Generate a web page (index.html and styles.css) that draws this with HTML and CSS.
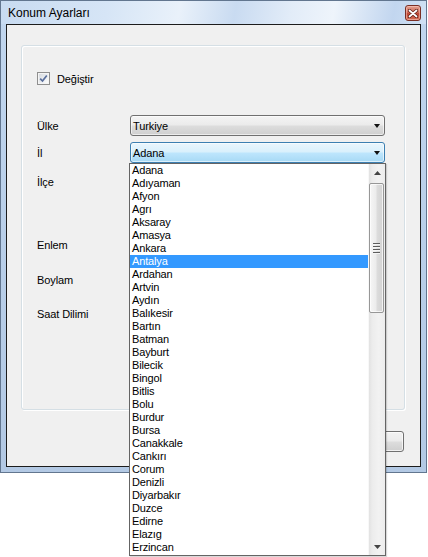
FILE: index.html
```html
<!DOCTYPE html>
<html lang="tr">
<head>
<meta charset="utf-8">
<title>Konum Ayarları</title>
<link rel="stylesheet" href="styles.css">
</head>
<body>
<div class="window">
  <div class="titlebar">
    <span class="title">Konum Ayarları</span>
    <span class="close" aria-label="Kapat">
      <svg width="10" height="9" viewBox="0 0 10 9"><path d="M1.5 1.5 L8.5 7.5 M8.5 1.5 L1.5 7.5" stroke="#5a1a12" stroke-width="3.2" stroke-linecap="round"/><path d="M1.5 1.5 L8.5 7.5 M8.5 1.5 L1.5 7.5" stroke="#ffffff" stroke-width="1.8" stroke-linecap="round"/></svg>
    </span>
  </div>
  <div class="client">
    <div class="group">
      <label class="row row-check">
        <span class="checkbox"><svg width="9" height="9" viewBox="0 0 9 9"><path d="M1.2 4.6 L3.5 7 L7.8 1.4" fill="none" stroke="#5a6f9c" stroke-width="1.7"/></svg></span>
        <span class="check-label">Değiştir</span>
      </label>
      <div class="row row-ulke">
        <span class="label">Ülke</span>
        <div class="combo"><span class="combo-text">Turkiye</span><span class="arrow"></span></div>
      </div>
      <div class="row row-il">
        <span class="label">İl</span>
        <div class="combo combo-open"><span class="combo-text">Adana</span><span class="arrow"></span></div>
      </div>
      <div class="row row-ilce">
        <span class="label">İlçe</span>
        <div class="combo"><span class="combo-text"></span><span class="arrow"></span></div>
      </div>
      <div class="row row-enlem">
        <span class="label">Enlem</span>
        <div class="textbox"></div>
      </div>
      <div class="row row-boylam">
        <span class="label">Boylam</span>
        <div class="textbox"></div>
      </div>
      <div class="row row-saat">
        <span class="label">Saat Dilimi</span>
        <div class="combo"><span class="combo-text"></span><span class="arrow"></span></div>
      </div>
    </div>
    <div class="footer">
      <button class="btn" type="button">Kaydet</button>
    </div>
  </div>
</div>

<div class="dropdown">
  <ul class="items">
    <li>Adana</li>
    <li>Adıyaman</li>
    <li>Afyon</li>
    <li>Agrı</li>
    <li>Aksaray</li>
    <li>Amasya</li>
    <li>Ankara</li>
    <li class="selected">Antalya</li>
    <li>Ardahan</li>
    <li>Artvin</li>
    <li>Aydın</li>
    <li>Balıkesir</li>
    <li>Bartın</li>
    <li>Batman</li>
    <li>Bayburt</li>
    <li>Bilecik</li>
    <li>Bingol</li>
    <li>Bitlis</li>
    <li>Bolu</li>
    <li>Burdur</li>
    <li>Bursa</li>
    <li>Canakkale</li>
    <li>Cankırı</li>
    <li>Corum</li>
    <li>Denizli</li>
    <li>Diyarbakır</li>
    <li>Duzce</li>
    <li>Edirne</li>
    <li>Elazıg</li>
    <li>Erzincan</li>
  </ul>
  <div class="scrollbar">
    <div class="sb-btn"><svg width="7" height="4" viewBox="0 0 7 4"><path d="M0 4 L3.5 0 L7 4 Z" fill="#444"/></svg></div>
    <div class="sb-track">
      <div class="sb-thumb"><span class="grip"></span><span class="grip"></span><span class="grip"></span><span class="grip"></span></div>
    </div>
    <div class="sb-btn"><svg width="7" height="4" viewBox="0 0 7 4"><path d="M0 0 L3.5 4 L7 0 Z" fill="#444"/></svg></div>
  </div>
</div>
</body>
</html>
```

FILE: styles.css
```css
html, body {
  margin: 0;
  padding: 0;
  background: #ffffff;
}

body {
  font-family: "Liberation Sans", Arial, sans-serif;
  font-size: 11px;
  color: #000;
  width: 428px;
  height: 557px;
  position: relative;
  overflow: hidden;
}

.window {
  width: 427px;
  height: 473px;
  box-sizing: border-box;
  border: 1px solid #62768f;
  background: linear-gradient(to bottom, #c2d7ef 0%, #b9cfe9 50%, #b3c9e4 100%);
  display: flex;
  flex-direction: column;
}

.titlebar {
  height: 23px;
  flex: none;
  display: flex;
  align-items: center;
  justify-content: space-between;
  padding: 0 5px 0 7px;
  background: linear-gradient(100deg, #c8dbf1 0%, #d6e5f6 25%, #e9f1fa 42%, #c9dbf1 55%, #e2ecf8 68%, #eef4fb 78%, #c2d6ef 92%, #d0e1f4 100%);
}

.title {
  font-size: 12px;
  line-height: 14px;
  color: #000;
  margin-top: 1px;
}

.close {
  width: 16px;
  height: 16px;
  box-sizing: border-box;
  border: 1px solid #7a2e24;
  border-radius: 3px;
  background: linear-gradient(to bottom, #e3a090 0%, #cf6a58 45%, #bb4432 55%, #d46f57 100%);
  display: flex;
  align-items: center;
  justify-content: center;
  box-shadow: inset 0 0 0 1px rgba(255, 210, 200, 0.5);
  margin-top: 1px;
}

.close svg {
  display: block;
}

.client {
  flex: none;
  height: 443px;
  margin: 0 5px;
  box-sizing: border-box;
  border: 1px solid #1c1c1c;
  background: #f0f0f0;
  display: flex;
  flex-direction: column;
}

.group {
  margin: 20px 15px 0 14px;
  height: 365px;
  box-sizing: border-box;
  border: 1px solid #d5dfe5;
  border-radius: 3px;
  box-shadow: inset 1px 1px 0 #ffffff, 1px 1px 0 #ffffff;
  padding: 0 0 0 15px;
  display: flex;
  flex-direction: column;
}

.row {
  height: 21px;
  display: flex;
  align-items: center;
  flex: none;
}

.row-check { margin-top: 22px; }
.row-ulke { margin-top: 26px; }
.row-il { margin-top: 6px; }
.row-ilce { margin-top: 8px; }
.row-enlem { margin-top: 42px; }
.row-boylam { margin-top: 14px; }
.row-saat { margin-top: 13px; }

.checkbox {
  width: 13px;
  height: 13px;
  box-sizing: border-box;
  border: 1px solid #8f8f8f;
  background: linear-gradient(135deg, #d3d7dd 0%, #eef0f2 60%, #ffffff 100%);
  box-shadow: inset 0 0 0 1px #f4f4f4;
  display: flex;
  align-items: center;
  justify-content: center;
}

.checkbox svg {
  display: block;
}

.check-label {
  margin-left: 7px;
  letter-spacing: -0.1px;
}

.label {
  width: 93px;
  flex: none;
  letter-spacing: -0.1px;
}

.combo {
  width: 255px;
  height: 21px;
  box-sizing: border-box;
  border: 1px solid #707070;
  border-radius: 3px;
  background: linear-gradient(to bottom, #f4f4f4 0%, #ebebeb 48%, #dddddd 52%, #cfcfcf 100%);
  box-shadow: inset 0 0 0 1px rgba(255, 255, 255, 0.6);
  display: flex;
  align-items: center;
  justify-content: space-between;
  padding: 0 4px 0 2px;
}

.combo-open {
  border-color: #3c7fb1;
  background: linear-gradient(to bottom, #eaf6fd 0%, #d9f0fc 48%, #bee6fd 52%, #a7d9f5 100%);
}

.combo-text {
  letter-spacing: -0.1px;
}

.arrow {
  width: 0;
  height: 0;
  border-left: 3.5px solid transparent;
  border-right: 3.5px solid transparent;
  border-top: 4px solid #111;
}

.textbox {
  width: 255px;
  height: 20px;
  box-sizing: border-box;
  border: 1px solid #abadb3;
  background: #fff;
}

.footer {
  display: flex;
  justify-content: flex-end;
  margin-top: 21px;
  padding-right: 16px;
}

.btn {
  width: 75px;
  height: 21px;
  box-sizing: border-box;
  border: 1px solid #707070;
  border-radius: 3px;
  background: linear-gradient(to bottom, #f2f2f2 0%, #ebebeb 48%, #dddddd 52%, #cfcfcf 100%);
  box-shadow: inset 0 0 0 1px rgba(255, 255, 255, 0.7);
  font-family: "Liberation Sans", Arial, sans-serif;
  font-size: 11px;
  color: #000;
  padding: 0;
}

/* Open drop-down list (popup overlay) */
.dropdown {
  position: absolute;
  left: 129px;
  top: 163px;
  width: 257px;
  height: 393px;
  box-sizing: border-box;
  border: 1px solid #646464;
  background: #ffffff;
  display: flex;
  box-shadow: 1px 1px 1px rgba(0, 0, 0, 0.15);
}

.items {
  list-style: none;
  margin: 0;
  padding: 0;
  flex: 1;
}

.items li {
  height: 13px;
  line-height: 13px;
  padding-left: 2px;
  letter-spacing: -0.15px;
  white-space: nowrap;
}

.items li.selected {
  background: #3399ff;
  color: #ffffff;
}

.scrollbar {
  width: 17px;
  flex: none;
  display: flex;
  flex-direction: column;
  background: linear-gradient(to right, #e2e2e2 0%, #ececec 20%, #f2f2f2 60%, #ececec 100%);
  border-left: 1px solid #f8f8f8;
  box-sizing: border-box;
}

.sb-btn {
  height: 17px;
  flex: none;
  display: flex;
  align-items: center;
  justify-content: center;
}

.sb-btn svg {
  display: block;
}

.sb-track {
  flex: 1;
  padding: 2px 1px 0 0;
}

.sb-thumb {
  height: 130px;
  box-sizing: border-box;
  border: 1px solid #979797;
  border-radius: 2px;
  background: linear-gradient(to right, #f6f6f6 0%, #ececec 45%, #dcdcdc 55%, #d2d2d2 100%);
  box-shadow: inset 0 0 0 1px rgba(255, 255, 255, 0.7);
  display: flex;
  flex-direction: column;
  align-items: center;
  justify-content: center;
  gap: 1px;
}

.grip {
  width: 7px;
  height: 1px;
  background: #5d5d5d;
  border-bottom: 1px solid #f5f5f5;
}
```
